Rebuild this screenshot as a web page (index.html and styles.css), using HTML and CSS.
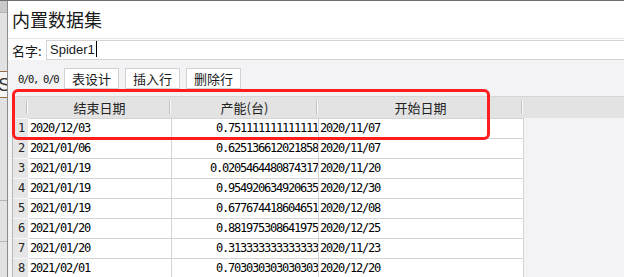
FILE: index.html
```html
<!DOCTYPE html>
<html lang="zh-CN">
<head>
    <meta charset="UTF-8">
    <title>内置数据集</title>
    <link rel="stylesheet" href="styles.css">
</head>
<body>
    <div class="screen">
        <!-- 뒤쪽 창 일부 -->
        <div class="backdrop">
            <div class="bd-top"></div>
            <div class="bd-tab">S</div>
            <div class="bd-line first"></div>
            <div class="bd-line"></div>
        </div>

        <div class="dialog">
            <div class="title">内置数据集</div>

            <div class="name-row">
                <label class="name-label">名字:</label>
                <div class="name-input">Spider1<span class="caret"></span></div>
            </div>

            <div class="toolbar">
                <span class="counter">0/0, 0/0</span>
                <button class="tool-btn">表设计</button>
                <button class="tool-btn">插入行</button>
                <button class="tool-btn">删除行</button>
            </div>

            <div class="grid-wrap">
                <div class="grid-head">
                    <div class="head-cell"></div>
                    <div class="head-cell">结束日期</div>
                    <div class="head-cell">产能(台)</div>
                    <div class="head-cell">开始日期</div>
                    <div class="head-fill"></div>
                </div>
                <div id="grid-body"></div>
                <div class="highlight"></div>
            </div>
        </div>
    </div>

    <script>
        // 데이터 행
        const rows = [
            ['2020/12/03', '0.751111111111111', '2020/11/07'],
            ['2021/01/06', '0.625136612021858', '2020/11/07'],
            ['2021/01/19', '0.0205464480874317', '2020/11/20'],
            ['2021/01/19', '0.954920634920635', '2020/12/30'],
            ['2021/01/19', '0.677674418604651', '2020/12/08'],
            ['2021/01/20', '0.881975308641975', '2020/12/25'],
            ['2021/01/20', '0.313333333333333', '2020/11/23'],
            ['2021/02/01', '0.703030303030303', '2020/12/20']
        ];

        const gridBody = document.getElementById('grid-body');
        rows.forEach((row, i) => {
            const tr = document.createElement('div');
            tr.className = 'grid-row';

            const num = document.createElement('div');
            num.className = 'cell row-num';
            num.textContent = i + 1;
            tr.appendChild(num);

            row.forEach((value, col) => {
                const td = document.createElement('div');
                td.className = col === 1 ? 'cell num' : 'cell';
                td.textContent = value;
                tr.appendChild(td);
            });
            gridBody.appendChild(tr);
        });
    </script>
</body>
</html>
```

FILE: styles.css
```css
/* 기본 스타일 */
* {
    box-sizing: border-box;
}
body {
    margin: 0;
    overflow: hidden;
    background-color: #dcdcdc;
    font-family: "Noto Sans CJK SC", sans-serif;
    color: #1a1a1a;
}
.screen {
    display: flex;
    width: 624px;
    height: 277px;
    border-top: 1px solid #6f6f6f;
}

/* 뒤쪽 창 */
.backdrop {
    width: 7px;
    flex-shrink: 0;
    display: flex;
    flex-direction: column;
    background-color: #e2e2e2;
    overflow: hidden;
}
.bd-top {
    height: 12px;
    background-color: #c9c9c9;
    border-bottom: 1px solid #b5b5b5;
}
.bd-tab {
    margin-top: 58px;
    height: 27px;
    border-top: 1px solid #9a6b3e;
    border-bottom: 1px solid #9a6b3e;
    background-color: #f4f4f4;
    font-family: "Liberation Sans", sans-serif;
    font-size: 19px;
    line-height: 25px;
    text-indent: -2px;
    color: #333;
}
.bd-line {
    margin-top: 40px;
    height: 1px;
    background-color: #b4b4b4;
}
.bd-line.first {
    margin-top: 102px;
}

/* 다이얼로그 */
.dialog {
    flex: 1;
    min-width: 0;
    display: flex;
    flex-direction: column;
    border-left: 1px solid #8c8c8c;
    background-color: #f3f3f5;
}
.title {
    height: 37px;
    line-height: 37px;
    padding-left: 4px;
    font-size: 18px;
    background-color: #fff;
}
.name-row {
    display: flex;
    align-items: center;
    gap: 4px;
    padding: 1px 0 0 4px;
    background-color: #fff;
    border-top: 1px solid #e6e6e6;
}
.name-label {
    width: 30px;
    font-size: 13px;
    white-space: nowrap;
}
.name-input {
    flex: 1;
    height: 20px;
    border: 1px solid #d4d4d4;
    border-right: none;
    padding-left: 3px;
    background-color: #fff;
    font-family: "Liberation Sans", sans-serif;
    font-size: 13px;
    line-height: 18px;
}
.caret {
    display: inline-block;
    width: 1px;
    height: 16px;
    margin-left: 1px;
    vertical-align: -3px;
    background-color: #000;
}

/* 툴바 */
.toolbar {
    display: flex;
    align-items: center;
    gap: 6px;
    height: 36px;
    padding: 8px 0 7px 10px;
}
.counter {
    width: 40px;
    white-space: nowrap;
    font-family: "DejaVu Sans Mono", monospace;
    font-size: 10.5px;
    letter-spacing: -1.3px;
    color: #111;
}
.tool-btn {
    width: 55px;
    height: 21px;
    padding: 0;
    border: 1px solid #d2d2d2;
    background-color: #fff;
    font-family: "Noto Sans CJK SC", sans-serif;
    font-size: 13px;
    line-height: 19px;
    color: #1a1a1a;
}

/* 표 */
.grid-wrap {
    position: relative;
    margin-left: 4px;
}
.grid-head {
    display: grid;
    grid-template-columns: 16px 143px 147px 205px 1fr;
    height: 22px;
    border-top: 1px solid #d6d6d6;
    background-color: #e3e3e3;
}
.head-cell {
    font-size: 13px;
    line-height: 21px;
    text-align: center;
    color: #222;
    /* 헤더 구분선 */
    background:
        linear-gradient(#c2c2c2, #c2c2c2) right 1px top 4px / 1px 13px no-repeat,
        linear-gradient(#fafafa, #fafafa) right 0 top 4px / 1px 13px no-repeat,
        #e3e3e3;
}
.grid-row {
    display: grid;
    grid-template-columns: 16px 143px 147px 205px;
    width: 511px;
    height: 20px;
    border-left: 1px solid #b9b9b9;
    background-color: #fff;
}
.cell {
    border-top: 1px solid #d4d4d4;
    border-right: 1px solid #d4d4d4;
    padding-left: 1px;
    font-family: "DejaVu Sans Mono", monospace;
    font-size: 12px;
    letter-spacing: -1.22px;
    line-height: 19px;
    white-space: nowrap;
    overflow: hidden;
    color: #000;
}
.cell.num {
    text-align: right;
    padding-left: 0;
    padding-right: 0;
}
.cell.row-num {
    padding-left: 0;
    text-align: center;
    text-indent: 1px;
    background-color: #e6e6e6;
    border-top-color: #f7f7f7;
    border-right-color: #fff;
    color: #222;
}

/* 빨간 강조 박스 */
.highlight {
    position: absolute;
    left: 0;
    top: -7px;
    width: 478px;
    height: 51px;
    border: 3px solid #ff1e1e;
    border-radius: 6px;
    pointer-events: none;
}
```
